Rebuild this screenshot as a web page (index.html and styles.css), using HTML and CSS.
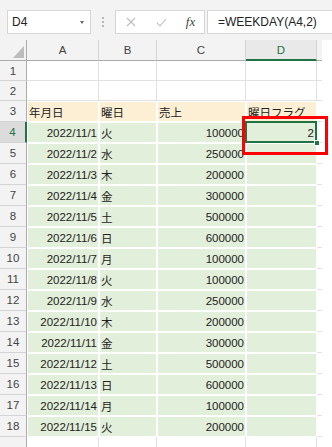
FILE: index.html
```html
<!DOCTYPE html>
<html lang="ja">
<head>
<meta charset="utf-8">
<link rel="stylesheet" href="styles.css">
</head>
<body>
<div class="app">
  <div class="fbar">
    <div class="namebox"><span>D4</span><span class="caret"></span></div>
    <div class="grip"><i></i><i></i><i></i></div>
    <div class="fxbox">
      <span class="b1"><svg width="10" height="10" viewBox="0 0 10 10"><path d="M1 1L9 9M9 1L1 9" stroke="#bdbdbd" stroke-width="1.1" fill="none"/></svg></span>
      <span class="b2"><svg width="11" height="9" viewBox="0 0 11 9"><path d="M0.8 4.6L4 7.8L10.2 1" stroke="#bdbdbd" stroke-width="1.1" fill="none"/></svg></span>
      <span class="b3 fx">fx</span>
    </div>
    <div class="finput">=WEEKDAY(A4,2)</div>
  </div>

  <div class="sheet">
    <div class="row hdr">
      <div class="corner"><span class="tri"></span></div>
      <div class="ch">A</div><div class="ch">B</div><div class="ch">C</div><div class="ch sel">D</div><div class="ch e"></div><div class="blank"></div>
    </div>
    <div class="row h20"><div class="rh">1</div><div class="g"></div><div class="g"></div><div class="g"></div><div class="g"></div><div class="g e"></div><div class="blank"></div></div>
    <div class="row h20"><div class="rh">2</div><div class="g"></div><div class="g"></div><div class="g"></div><div class="g"></div><div class="g e"></div><div class="blank"></div></div>
    <div class="row"><div class="rh">3</div><div class="f pe l">年月日</div><div class="f pe l">曜日</div><div class="f pe l">売上</div><div class="f pe l">曜日フラグ</div><div class="g e"></div><div class="blank"></div></div>
    <div class="row"><div class="rh sel">4</div><div class="f gr r">2022/11/1</div><div class="f gr l">火</div><div class="f gr r">100000</div><div class="f gr r active">2<span class="cursor"></span><span class="handle"></span></div><div class="g e"></div><div class="blank"></div></div>
    <div class="row"><div class="rh">5</div><div class="f gr r">2022/11/2</div><div class="f gr l">水</div><div class="f gr r">250000</div><div class="f gr"></div><div class="g e"></div><div class="blank"></div></div>
    <div class="row"><div class="rh">6</div><div class="f gr r">2022/11/3</div><div class="f gr l">木</div><div class="f gr r">200000</div><div class="f gr"></div><div class="g e"></div><div class="blank"></div></div>
    <div class="row"><div class="rh">7</div><div class="f gr r">2022/11/4</div><div class="f gr l">金</div><div class="f gr r">300000</div><div class="f gr"></div><div class="g e"></div><div class="blank"></div></div>
    <div class="row"><div class="rh">8</div><div class="f gr r">2022/11/5</div><div class="f gr l">土</div><div class="f gr r">500000</div><div class="f gr"></div><div class="g e"></div><div class="blank"></div></div>
    <div class="row"><div class="rh">9</div><div class="f gr r">2022/11/6</div><div class="f gr l">日</div><div class="f gr r">600000</div><div class="f gr"></div><div class="g e"></div><div class="blank"></div></div>
    <div class="row"><div class="rh">10</div><div class="f gr r">2022/11/7</div><div class="f gr l">月</div><div class="f gr r">100000</div><div class="f gr"></div><div class="g e"></div><div class="blank"></div></div>
    <div class="row"><div class="rh">11</div><div class="f gr r">2022/11/8</div><div class="f gr l">火</div><div class="f gr r">100000</div><div class="f gr"></div><div class="g e"></div><div class="blank"></div></div>
    <div class="row"><div class="rh">12</div><div class="f gr r">2022/11/9</div><div class="f gr l">水</div><div class="f gr r">250000</div><div class="f gr"></div><div class="g e"></div><div class="blank"></div></div>
    <div class="row"><div class="rh">13</div><div class="f gr r">2022/11/10</div><div class="f gr l">木</div><div class="f gr r">200000</div><div class="f gr"></div><div class="g e"></div><div class="blank"></div></div>
    <div class="row"><div class="rh">14</div><div class="f gr r">2022/11/11</div><div class="f gr l">金</div><div class="f gr r">300000</div><div class="f gr"></div><div class="g e"></div><div class="blank"></div></div>
    <div class="row"><div class="rh">15</div><div class="f gr r">2022/11/12</div><div class="f gr l">土</div><div class="f gr r">500000</div><div class="f gr"></div><div class="g e"></div><div class="blank"></div></div>
    <div class="row"><div class="rh">16</div><div class="f gr r">2022/11/13</div><div class="f gr l">日</div><div class="f gr r">600000</div><div class="f gr"></div><div class="g e"></div><div class="blank"></div></div>
    <div class="row"><div class="rh">17</div><div class="f gr r">2022/11/14</div><div class="f gr l">月</div><div class="f gr r">100000</div><div class="f gr"></div><div class="g e"></div><div class="blank"></div></div>
    <div class="row"><div class="rh">18</div><div class="f gr r">2022/11/15</div><div class="f gr l">火</div><div class="f gr r">200000</div><div class="f gr"></div><div class="g e"></div><div class="blank"></div></div>
    <div class="row"><div class="rh"></div><div class="g"></div><div class="g"></div><div class="g"></div><div class="g"></div><div class="g e"></div><div class="blank"></div></div>
  </div>

  <div class="redbox"></div>
</div>
</body>
</html>
```

FILE: styles.css
```css
* { box-sizing: border-box; }
html, body { margin: 0; padding: 0; }
body {
  width: 332px;
  height: 447px;
  overflow: hidden;
  background: #fff;
  font-family: "Liberation Sans", "Noto Sans CJK JP", sans-serif;
}
.app {
  position: relative;
  width: 332px;
  height: 447px;
  overflow: hidden;
}

/* formula bar */
.fbar {
  height: 40px;
  background: #f3f3f3;
  display: flex;
  align-items: flex-start;
  padding: 10px 0 0 7px;
}
.namebox {
  width: 84px;
  height: 24px;
  background: #fff;
  border: 1px solid #d6d6d6;
  display: flex;
  align-items: center;
  padding-left: 4px;
  font-size: 12px;
  color: #222;
}
.caret {
  margin-left: auto;
  margin-right: 6px;
  width: 0;
  height: 0;
  border-left: 2.5px solid transparent;
  border-right: 2.5px solid transparent;
  border-top: 3px solid #666;
}
.grip {
  width: 24px;
  height: 24px;
  display: flex;
  flex-direction: column;
  align-items: center;
  justify-content: center;
  gap: 2px;
}
.grip i {
  display: block;
  width: 2px;
  height: 2px;
  background: #b8b8b8;
}
.fxbox {
  width: 90px;
  height: 24px;
  background: #fff;
  border: 1px solid #d6d6d6;
  display: flex;
  align-items: center;
}
.fxbox span {
  display: flex;
  align-items: center;
  justify-content: center;
  height: 22px;
}
.b1 { width: 29px; }
.b2 { width: 33px; }
.b3 { width: 25px; }
.fx {
  font-family: "Liberation Serif", serif;
  font-style: italic;
  font-size: 13px;
  color: #444;
}
.finput {
  flex: 1;
  margin-left: 2px;
  height: 24px;
  background: #fff;
  border: 1px solid #d6d6d6;
  border-right: none;
  padding-left: 10px;
  font-size: 12px;
  line-height: 22px;
  color: #222;
  white-space: nowrap;
}

/* sheet */
.row {
  display: grid;
  grid-template-columns: 27px 72px 58px 89px 71px 5px 1fr;
  height: 21px;
}
.row.h20 { height: 20px; }
.row > div {
  display: flex;
  align-items: center;
  white-space: nowrap;
  overflow: hidden;
}
.corner {
  background: #f3f3f3;
  border-right: 1px solid #ababab;
  border-bottom: 1px solid #ababab;
  position: relative;
}
.tri {
  position: absolute;
  right: 2px;
  bottom: 2px;
  width: 0;
  height: 0;
  border-left: 11px solid transparent;
  border-bottom: 12px solid #bcbcbc;
}
.ch {
  background: #f3f3f3;
  border-right: 1px solid #d4d4d4;
  border-bottom: 1px solid #ababab;
  justify-content: center;
  font-size: 11.5px;
  color: #444;
}
.ch.sel {
  background: #e9e9e9;
  color: #217346;
  border-bottom: 2px solid #217346;
}
.ch.e { border-right: none; }
.rh {
  background: #f3f3f3;
  border-right: 1px solid #ababab;
  border-bottom: 1px solid #d4d4d4;
  justify-content: center;
  font-size: 11.5px;
  color: #444;
}
.rh.sel {
  background: #dcdcdc;
  color: #217346;
  border-right: 2px solid #217346;
}
.g {
  border-right: 1px solid #e1e1e1;
  border-bottom: 1px solid #e1e1e1;
}
.g.e { border-right: none; }
.f {
  border: 1px solid #fff;
  font-size: 11.5px;
  color: #222;
  padding: 0 1px;
}
.gr { background: #e2efda; }
.pe { background: #fdefd4; }
.l { justify-content: flex-start; }
.r { justify-content: flex-end; }
.row > .active {
  position: relative;
  overflow: visible;
  padding-right: 2px;
}
.cursor {
  position: absolute;
  left: -2px;
  top: -2px;
  right: -1px;
  bottom: -1px;
  border: 2px solid #217346;
  z-index: 2;
}
.handle {
  position: absolute;
  right: -4px;
  bottom: -4px;
  width: 6px;
  height: 6px;
  background: #217346;
  border: 1px solid #fff;
  z-index: 3;
}
.blank { background: #fff; }

.redbox {
  position: absolute;
  left: 242px;
  top: 116px;
  width: 86px;
  height: 39px;
  border: 3px solid #f00;
  z-index: 5;
}
```
